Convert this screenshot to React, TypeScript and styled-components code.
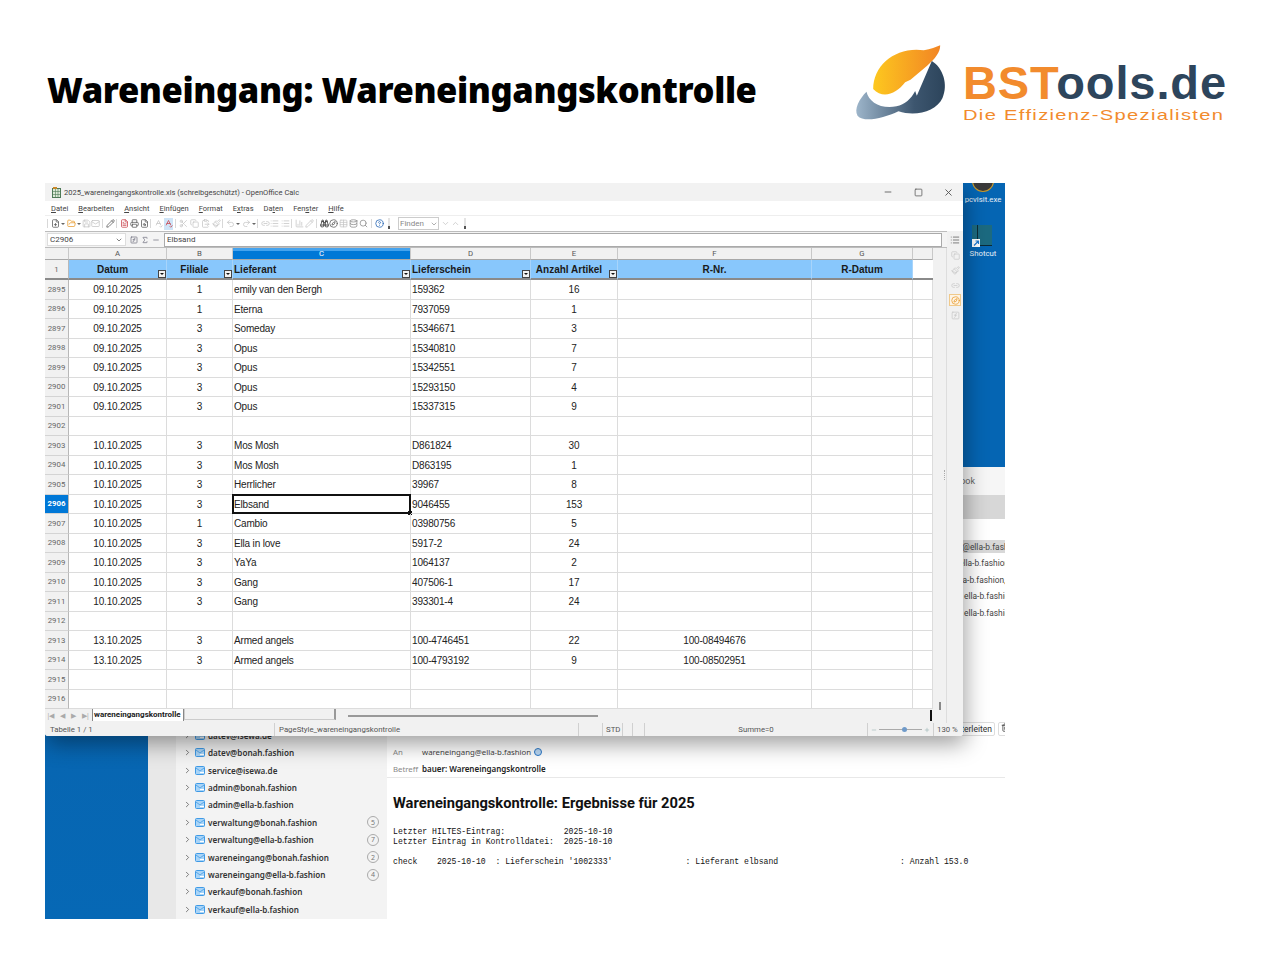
import React from 'react';
import styled, { createGlobalStyle } from 'styled-components';
import {
    BarChart3, Binoculars, ChevronDown, ChevronRight, ClipboardPaste, Compass, Copy, Database, FilePlus, FileSearch,
    FileText, FolderOpen, FunctionSquare, HelpCircle, Link2, List, Mail, Minus, Paintbrush, Pencil, Plus, Printer,
    Redo2, Save, Scissors, Search, Sigma, SpellCheck, Square, Table, Trash2, Undo2, X
} from 'lucide-react';

const GlobalStyle = createGlobalStyle`
    html, body { margin: 0; padding: 0; background: #fff; }
    body { font-family: "Liberation Sans", Arial, sans-serif; }
`;

const Slide = styled.div`
    width: 1280px;
    height: 962px;
    overflow: hidden;
    background: #fff;
`;

const Header = styled.header`
    height: 183px;
    box-sizing: border-box;
    padding: 43px 53px 0 47px;
    display: flex;
    justify-content: space-between;
    align-items: flex-start;
`;

const Title = styled.h1`
    margin: 24px 0 0;
    font-family: "Noto Sans", sans-serif;
    font-weight: 900;
    font-size: 34.5px;
    letter-spacing: -0.4px;
    line-height: 46px;
    color: #000;
    white-space: nowrap;
`;

const Logo = styled.div`
    display: flex;
    align-items: flex-start;
    gap: 13px;
`;

const LogoText = styled.div`
    display: flex;
    flex-direction: column;
    margin-top: 19px;
`;

const LogoName = styled.div`
    font-weight: 700;
    font-size: 47px;
    line-height: 42px;
    letter-spacing: 0.9px;
    color: #2d455c;
    white-space: nowrap;
    span { color: #f28b2d; }
`;

const LogoSub = styled.div`
    width: 194px;
    margin-top: 2px;
    font-size: 15px;
    line-height: 18px;
    letter-spacing: 1px;
    color: #f28b2d;
    white-space: nowrap;
    transform: scaleX(1.34);
    transform-origin: left center;
`;

const Shot = styled.div`
    position: relative;
    width: 960px;
    height: 736px;
    margin-left: 45px;
    overflow: hidden;
    display: flex;
`;

const DesktopStrip = styled.div`
    width: 103px;
    flex: none;
    background: linear-gradient(180deg, #0a5ea6, #0668b5);
`;

const MailApp = styled.div`
    flex: 1;
    min-width: 0;
    display: flex;
    flex-direction: column;
`;

const DesktopBand = styled.div`
    height: 284px;
    flex: none;
    overflow: hidden;
    background: #0565b3;
    display: flex;
    flex-direction: column;
    align-items: flex-end;
    padding-right: 3px;
`;

const DesktopIcon = styled.div`
    width: 38px;
    display: flex;
    flex-direction: column;
    align-items: center;
    margin-bottom: 20px;
    color: #e8f0f8;
    font: 7.8px/10px Roboto, sans-serif;
    white-space: nowrap;
    svg { margin-bottom: 2px; }
`;

const OutlookTabs = styled.div`
    height: 28px;
    flex: none;
    background: #f6f6f6;
    display: flex;
    justify-content: flex-end;
    align-items: center;
    padding-right: 30px;
    color: #666;
    font: 9px Roboto, sans-serif;
`;

const Ribbon = styled.div`
    height: 24px;
    flex: none;
    background: #d7d7d7;
`;

const MailBody = styled.div`
    flex: 1;
    min-height: 0;
    display: flex;
`;

const IconRail = styled.div`
    width: 28px;
    flex: none;
    background: #e8e8e8;
`;

const FolderPane = styled.div`
    width: 211px;
    flex: none;
    box-sizing: border-box;
    background: #f3f3f3;
    display: flex;
    flex-direction: column;
    justify-content: flex-end;
    padding-bottom: 1px;
`;

const FolderRow = styled.div`
    height: 17.4px;
    display: flex;
    align-items: center;
    padding-left: 7px;
    font: 600 8.1px "Noto Sans", sans-serif;
    color: #333;
    white-space: nowrap;
    svg { flex: none; }
`;

const FolderGap = styled.span`
    width: 3px;
    flex: none;
`;

const FolderName = styled.span`
    flex: 1;
    margin-left: 3px;
`;

const Count = styled.span`
    width: 10px;
    height: 10px;
    margin-right: 8px;
    border: 1px solid #aaa;
    border-radius: 50%;
    font: 7px "Noto Sans", sans-serif;
    color: #777;
    display: flex;
    align-items: center;
    justify-content: center;
`;

const MessagePane = styled.div`
    flex: 1;
    min-width: 0;
    overflow: hidden;
    background: #fff;
    display: flex;
    flex-direction: column;
`;

const Recipients = styled.div`
    height: 203px;
    flex: none;
    box-sizing: border-box;
    padding-top: 21px;
`;

const RecipientLine = styled.div<{ $indent: number; $active?: boolean }>`
    height: 16.4px;
    padding-left: ${p => p.$indent}px;
    font: 8.4px/14px Roboto, sans-serif;
    color: #444;
    white-space: nowrap;
    overflow: hidden;
    background: ${p => (p.$active ? 'linear-gradient(#d8d8d8 0 13px, transparent 13px)' : 'none')};
`;

const ActionRow = styled.div`
    height: 13px;
    flex: none;
    display: flex;
    justify-content: flex-end;
    margin-right: -8px;
    gap: 3px;
`;

const ActionButton = styled.span`
    box-sizing: border-box;
    height: 14px;
    border: 1px solid #ddd;
    border-radius: 2px;
    padding: 0 2px;
    font: 8.5px/12px Roboto, sans-serif;
    color: #333;
    white-space: nowrap;
    background: #fff;
`;

const MetaBlock = styled.div`
    flex: none;
    height: 43px;
    box-sizing: border-box;
    padding-top: 8px;
    border-bottom: 1px solid #e8e8e8;
`;

const MetaRow = styled.div`
    height: 17px;
    display: flex;
    align-items: center;
    padding-left: 6px;
    font: 7.8px "Noto Sans", sans-serif;
    color: #444;
    white-space: nowrap;
`;

const MetaLabel = styled.span`
    width: 29px;
    flex: none;
    color: #888;
`;

const MetaSubject = styled.span`
    font-size: 8px;
    font-weight: 600;
    color: #222;
`;

const Presence = styled.span`
    width: 6px;
    height: 6px;
    margin-left: 3px;
    border: 1px solid #2a78c8;
    border-radius: 50%;
    background: #bcd9f5;
`;

const Message = styled.div`
    padding: 15px 6px 0;
`;

const MessageTitle = styled.h2`
    margin: 0 0 14px;
    font: 700 14.7px/20px Roboto, sans-serif;
    color: #111;
    white-space: nowrap;
`;

const Mono = styled.pre`
    margin: 0;
    font: 8.13px/10px "Liberation Mono", monospace;
    color: #111;
`;

const CalcWindow = styled.div`
    position: absolute;
    left: 0;
    top: 0;
    width: 918px;
    height: 553px;
    display: flex;
    flex-direction: column;
    background: #f1f1f1;
    border-radius: 0 3px 3px 3px;
    box-shadow: 2px 8px 22px rgba(0, 0, 0, 0.38);
    color: #333;
`;

const TitleBar = styled.div`
    height: 18px;
    flex: none;
    display: flex;
    align-items: center;
    padding-left: 7px;
    background: #f2f2f2;
    font: 7.5px Roboto, sans-serif;
    color: #444;
`;

const TitleText = styled.span`
    flex: 1;
    margin-left: 3px;
    white-space: nowrap;
`;

const WindowButton = styled.span`
    width: 30px;
    height: 18px;
    display: flex;
    align-items: center;
    justify-content: center;
    color: #555;
`;

const MenuBar = styled.div`
    height: 14px;
    flex: none;
    display: flex;
    align-items: center;
    gap: 10px;
    padding-left: 6px;
    background: #fff;
    font: 7.5px Roboto, sans-serif;
    color: #444;
    u { text-decoration-thickness: 1px; }
`;

const ToolBar = styled.div`
    height: 16px;
    flex: none;
    display: flex;
    align-items: center;
    padding-left: 2px;
    background: #fff;
    border-top: 1px solid #eee;
    box-sizing: border-box;
`;

const Tool = styled.span<{ $gap?: number; $active?: boolean; $tint?: string }>`
    width: 9px;
    height: 12px;
    flex: none;
    margin-right: ${p => p.$gap ?? 0}px;
    display: flex;
    align-items: center;
    justify-content: center;
    color: ${p => p.$tint ?? '#c4c4c4'};
    background: ${p => (p.$active ? '#cfe4f7' : 'none')};
`;

const ToolSeparator = styled.span`
    width: 1px;
    height: 9px;
    flex: none;
    margin-right: 3px;
    background: #d8d8d8;
`;

const Caret = styled.span`
    width: 0;
    height: 0;
    flex: none;
    margin: 0 1.5px 0 1px;
    border-left: 2px solid transparent;
    border-right: 2px solid transparent;
    border-top: 2px solid #666;
`;

const Handle = styled.span<{ $after: number }>`
    width: 2px;
    height: 11px;
    flex: none;
    margin: 0 ${p => p.$after}px 0 4px;
    background: linear-gradient(#e4e4e4 0 8px, #555 8px);
`;

const FindBox = styled.span`
    box-sizing: border-box;
    width: 41px;
    height: 13px;
    flex: none;
    margin-right: 2px;
    border: 1px solid #ccc;
    display: flex;
    align-items: center;
    justify-content: space-between;
    padding-left: 1px;
    font: 8px Roboto, sans-serif;
    color: #888;
`;

const FormulaBar = styled.div`
    height: 17px;
    flex: none;
    box-sizing: border-box;
    display: flex;
    align-items: center;
    padding: 0 21px 0 2px;
    border-top: 1px solid #bcbcbc;
    border-bottom: 1px solid #bcbcbc;
    background: #f4f4f4;
    font: 8px Roboto, sans-serif;
    color: #444;
`;

const NameBox = styled.span`
    box-sizing: border-box;
    width: 79px;
    height: 13px;
    flex: none;
    display: flex;
    align-items: center;
    justify-content: space-between;
    padding: 0 2px;
    background: #fff;
    border: 1px solid #ddd;
`;

const FormulaTools = styled.span`
    width: 38px;
    flex: none;
    display: flex;
    align-items: center;
    justify-content: center;
    gap: 3px;
    color: #667;
`;

const FormulaInput = styled.span`
    box-sizing: border-box;
    flex: 1;
    height: 14px;
    padding-left: 2px;
    line-height: 12px;
    background: #fff;
    border: 1px solid #aaa;
`;

const Workspace = styled.div`
    flex: 1;
    min-height: 0;
    display: flex;
`;

const SheetColumn = styled.div`
    width: 888px;
    flex: none;
    display: flex;
    flex-direction: column;
`;

const COLUMNS = '24px 98px 66px 178px 120px 87px 194px 101px 20px';

const ColumnHeads = styled.div`
    display: grid;
    grid-template-columns: ${COLUMNS};
    height: 12px;
`;

const Sheet = styled.div`
    display: grid;
    grid-template-columns: ${COLUMNS};
    grid-template-rows: 20px;
    grid-auto-rows: 19.5px;
    background: #fff;
`;

const ColHead = styled.div<{ $selected?: boolean }>`
    height: 12px;
    box-sizing: border-box;
    text-align: center;
    font: 7.8px/11px Roboto, sans-serif;
    color: ${p => (p.$selected ? '#fff' : '#555')};
    background: ${p => (p.$selected ? 'linear-gradient(#45a3ee 0 3px, #0078d7 3px)' : '#f1f1f1')};
    border-right: 1px solid #c8c8c8;
    border-bottom: 1px solid #a8a8a8;
`;

const RowHead = styled.div<{ $selected?: boolean }>`
    box-sizing: border-box;
    display: flex;
    align-items: center;
    justify-content: center;
    font: ${p => (p.$selected ? 700 : 400)} 7.8px Roboto, sans-serif;
    color: ${p => (p.$selected ? '#fff' : '#666')};
    background: ${p => (p.$selected ? '#0078d7' : '#f1f1f1')};
    border-right: 1px solid #b8b8b8;
    border-bottom: 1px solid #d4d4d4;
`;

const Cell = styled.div<{ $align?: string }>`
    position: relative;
    box-sizing: border-box;
    padding: 0 1px;
    text-align: ${p => p.$align ?? 'left'};
    font-size: 10px;
    letter-spacing: -0.17px;
    line-height: 19px;
    color: #222;
    white-space: nowrap;
    border-right: 1px solid #dcdcdc;
    border-bottom: 1px solid #dcdcdc;
`;

const CursorFrame = styled.span`
    position: absolute;
    inset: -1px -1px -1px -1px;
    border: 2px solid #111;
    pointer-events: none;
    &::after {
        content: '';
        position: absolute;
        right: -3px;
        bottom: -3px;
        width: 4px;
        height: 4px;
        background: #111;
    }
`;

const HeadCell = styled.div<{ $align?: string; $filter?: boolean }>`
    position: relative;
    box-sizing: border-box;
    padding: ${p => (p.$align === 'left' ? '1px 1px 0' : p.$filter ? '1px 10px 0 0' : '1px 0 0')};
    text-align: ${p => p.$align ?? 'center'};
    font: 700 10px/18px "Liberation Sans", sans-serif;
    color: #1a1a1a;
    background: #88c7fc;
    white-space: nowrap;
    border-right: 1px solid #a7d4fb;
    border-bottom: 2px solid #8a8a8a;
`;

const HeadBlank = styled.div`
    background: #fff;
    border-bottom: 2px solid #8a8a8a;
`;

const HeadRowNumber = styled(RowHead)`
    border-bottom: 2px solid #8a8a8a;
`;

const FilterButton = styled.span`
    position: absolute;
    right: 0;
    bottom: 0;
    box-sizing: border-box;
    width: 8px;
    height: 8px;
    border: 1px solid #444;
    background: #f2f2f2;
    &::after {
        content: '';
        position: absolute;
        left: 1px;
        top: 2px;
        border-left: 2px solid transparent;
        border-right: 2px solid transparent;
        border-top: 2px solid #111;
    }
`;

const TabBar = styled.div`
    flex: 1;
    min-height: 0;
    display: flex;
    align-items: flex-start;
    background: #f1f1f1;
`;

const TabNav = styled.span`
    width: 11.5px;
    height: 13px;
    flex: none;
    display: flex;
    align-items: center;
    justify-content: center;
    color: #aaa;
    font-size: 6.5px;
`;

const ActiveTab = styled.span`
    box-sizing: border-box;
    height: 12px;
    margin-left: 1px;
    padding: 0 2px 0 1px;
    background: #fff;
    border-left: 1px solid #888;
    border-right: 1px solid #888;
    font: 700 8px/12px Roboto, sans-serif;
    color: #222;
    white-space: nowrap;
`;

const TabRest = styled.span`
    box-sizing: border-box;
    width: 152px;
    height: 11px;
    flex: none;
    border: 1px solid #ccc;
    border-top: none;
    border-right: 2px solid #999;
`;

const ScrollTrack = styled.span`
    flex: 1;
    height: 13px;
    margin-left: 12px;
    display: flex;
    align-items: center;
    justify-content: space-between;
    padding-right: 1px;
`;

const ScrollThumb = styled.span`
    width: 250px;
    height: 2px;
    background: #999;
`;

const ScrollEnd = styled.span`
    width: 2px;
    height: 11px;
    background: #111;
`;

const VScroll = styled.div`
    width: 14px;
    flex: none;
    display: flex;
    flex-direction: column;
    justify-content: flex-end;
    align-items: center;
    padding-bottom: 13px;
    box-sizing: border-box;
    background: #f1f1f1;
    border-right: 1px solid #ddd;
`;

const VThumb = styled.span`
    width: 2px;
    height: 8px;
    background: #888;
`;

const Deck = styled.div`
    position: relative;
    flex: 1;
    display: flex;
    flex-direction: column;
    align-items: center;
    padding-top: 3px;
    gap: 3px;
    margin-top: -17px;
    background: #f1f1f1;
    color: #ccc;
    z-index: 1;
`;

const DeckButton = styled.span<{ $active?: boolean; $tint?: string }>`
    box-sizing: border-box;
    width: 12px;
    height: 12px;
    display: flex;
    align-items: center;
    justify-content: center;
    color: ${p => p.$tint ?? '#c8c8c8'};
    border: ${p => (p.$active ? '1px solid #f0c98a' : 'none')};
    background: ${p => (p.$active ? '#fdf4e6' : 'none')};
`;

const DeckGrip = styled.span`
    position: absolute;
    left: -3px;
    top: 239px;
    width: 2px;
    height: 10px;
    border-left: 1px dotted #aaa;
`;

const StatusBar = styled.div`
    height: 13px;
    flex: none;
    display: flex;
    align-items: center;
    background: #f1f1f1;
    font: 7.8px/13px Roboto, sans-serif;
    color: #555;
    border-radius: 0 0 3px 3px;
`;

const StatusCell = styled.span<{ $width: number; $center?: boolean; $start?: number }>`
    box-sizing: border-box;
    width: ${p => p.$width}px;
    height: 13px;
    flex: none;
    padding-left: ${p => p.$start ?? 4}px;
    text-align: ${p => (p.$center ? 'center' : 'left')};
    border-right: 1px solid #d0d0d0;
    white-space: nowrap;
`;

const ZoomValue = styled.span`
    padding-left: 3px;
`;

const ZoomCell = styled.span`
    box-sizing: border-box;
    width: 66px;
    height: 13px;
    flex: none;
    padding: 0 3px;
    display: flex;
    align-items: center;
    gap: 2px;
    color: #8aa;
    border-right: 1px solid #d0d0d0;
`;

const ZoomTrack = styled.span`
    position: relative;
    flex: 1;
    height: 1px;
    background: #aaa;
`;

const ZoomKnob = styled.span`
    position: absolute;
    left: 23px;
    top: -2px;
    width: 5px;
    height: 5px;
    border-radius: 50%;
    background: #6f9ac9;
`;

const TINT = { blue: '#3d78b8', red: '#c8404a', orange: '#e89a2a', ink: '#555', green: '#4f9a5a' };

// row number, datum, filiale, lieferant, lieferschein, anzahl, r-nr
type RowData = [number, string, string, string, string, string, string];

const rows: RowData[] = [
    [2895, '09.10.2025', '1', 'emily van den Bergh', '159362', '16', ''],
    [2896, '09.10.2025', '1', 'Eterna', '7937059', '1', ''],
    [2897, '09.10.2025', '3', 'Someday', '15346671', '3', ''],
    [2898, '09.10.2025', '3', 'Opus', '15340810', '7', ''],
    [2899, '09.10.2025', '3', 'Opus', '15342551', '7', ''],
    [2900, '09.10.2025', '3', 'Opus', '15293150', '4', ''],
    [2901, '09.10.2025', '3', 'Opus', '15337315', '9', ''],
    [2902, '', '', '', '', '', ''],
    [2903, '10.10.2025', '3', 'Mos Mosh', 'D861824', '30', ''],
    [2904, '10.10.2025', '3', 'Mos Mosh', 'D863195', '1', ''],
    [2905, '10.10.2025', '3', 'Herrlicher', '39967', '8', ''],
    [2906, '10.10.2025', '3', 'Elbsand', '9046455', '153', ''],
    [2907, '10.10.2025', '1', 'Cambio', '03980756', '5', ''],
    [2908, '10.10.2025', '3', 'Ella in love', '5917-2', '24', ''],
    [2909, '10.10.2025', '3', 'YaYa', '1064137', '2', ''],
    [2910, '10.10.2025', '3', 'Gang', '407506-1', '17', ''],
    [2911, '10.10.2025', '3', 'Gang', '393301-4', '24', ''],
    [2912, '', '', '', '', '', ''],
    [2913, '13.10.2025', '3', 'Armed angels', '100-4746451', '22', '100-08494676'],
    [2914, '13.10.2025', '3', 'Armed angels', '100-4793192', '9', '100-08502951'],
    [2915, '', '', '', '', '', ''],
    [2916, '', '', '', '', '', '']
];

const folders: [string, number?][] = [
    ['datev@isewa.de'],
    ['datev@bonah.fashion'],
    ['service@isewa.de'],
    ['admin@bonah.fashion'],
    ['admin@ella-b.fashion'],
    ['verwaltung@bonah.fashion', 5],
    ['verwaltung@ella-b.fashion', 7],
    ['wareneingang@bonah.fashion', 2],
    ['wareneingang@ella-b.fashion', 4],
    ['verkauf@bonah.fashion'],
    ['verkauf@ella-b.fashion']
];

const LogoMark = () => (
    <svg width="97" height="80" viewBox="40 40 290 240">
        <defs>
            <linearGradient id="sun" x1="0" x2="1" y1="0" y2="0">
                <stop offset="0" stopColor="#fdc81f" />
                <stop offset="1" stopColor="#f28524" />
            </linearGradient>
            <linearGradient id="night" x1="0" x2="1" y1="0" y2="0">
                <stop offset="0" stopColor="#9db5ca" />
                <stop offset="0.65" stopColor="#3d566f" />
                <stop offset="1" stopColor="#2c445b" />
            </linearGradient>
        </defs>
        <path d="M100 178 C100 105 170 50 252 62 C272 58 290 52 301 47 C302 66 286 88 262 108 L212 150 L196 158 C170 192 130 210 100 178 Z" fill="url(#sun)" />
        <path d="M276 94 C310 115 326 165 308 205 C290 245 228 262 176 245 C130 266 72 280 53 258 C42 238 58 208 80 186 C86 216 124 240 170 230 C195 224 214 208 226 184 L231 198 L262 126 Z" fill="url(#night)" />
    </svg>
);

const MailFolderIcon = () => (
    <svg width="10" height="9" viewBox="0 0 10 9">
        <rect x="0.5" y="0.5" width="9" height="8" rx="1" fill="#a9d4f7" stroke="#3f9ae6" />
        <path d="M1 2 L5 5 L9 2" fill="none" stroke="#3f9ae6" strokeWidth="0.8" />
        <path d="M5 6.5 H9" stroke="#fff" strokeWidth="1" />
    </svg>
);

const ShotcutIcon = () => (
    <svg width="22" height="22" viewBox="0 0 22 22">
        <rect x="0" y="0" width="20" height="21" fill="#1c6a80" />
        <rect x="5" y="0" width="1" height="21" fill="#0b2a36" />
        <rect x="0" y="20" width="20" height="1" fill="#0b2a36" />
        <rect x="0" y="14" width="8" height="8" fill="#fff" />
        <path d="M2 20.5 L6 16.5 M3.5 16 H6.5 V19" stroke="#1f7ad0" strokeWidth="1.2" fill="none" />
    </svg>
);

const CalcIcon = () => (
    <svg width="9" height="11" viewBox="0 0 9 11">
        <rect x="0.5" y="1.5" width="8" height="9" fill="#dcead8" stroke="#4f7a58" />
        <path d="M0.5 4.5H8.5M0.5 7.5H8.5M3.5 1.5V10.5M6 1.5V10.5" stroke="#4f7a58" strokeWidth="0.6" />
        <rect x="1" y="0" width="4" height="2" fill="#c9882a" />
    </svg>
);

const SheetGrid = () => (
    <Sheet>
        <HeadRowNumber>1</HeadRowNumber>
        <HeadCell $filter>Datum<FilterButton /></HeadCell>
        <HeadCell $filter>Filiale<FilterButton /></HeadCell>
        <HeadCell $align="left">Lieferant<FilterButton /></HeadCell>
        <HeadCell $align="left">Lieferschein<FilterButton /></HeadCell>
        <HeadCell $filter>Anzahl Artikel<FilterButton /></HeadCell>
        <HeadCell>R-Nr.</HeadCell>
        <HeadCell>R-Datum</HeadCell>
        <HeadBlank />
        {rows.map(r => {
            const selected = r[0] === 2906;
            return (
                <React.Fragment key={r[0]}>
                    <RowHead $selected={selected}>{r[0]}</RowHead>
                    <Cell $align="center">{r[1]}</Cell>
                    <Cell $align="center">{r[2]}</Cell>
                    <Cell>{r[3]}{selected && <CursorFrame />}</Cell>
                    <Cell>{r[4]}</Cell>
                    <Cell $align="center">{r[5]}</Cell>
                    <Cell $align="center">{r[6]}</Cell>
                    <Cell />
                    <Cell />
                </React.Fragment>
            );
        })}
    </Sheet>
);

const Toolbar = () => (
    <ToolBar>
        <ToolSeparator />
        <Tool $tint={TINT.ink}><FilePlus size={9} /></Tool><Caret />
        <Tool $tint={TINT.orange}><FolderOpen size={9} /></Tool><Caret />
        <Tool><Save size={9} /></Tool>
        <Tool $gap={2}><Mail size={9} /></Tool>
        <ToolSeparator />
        <Tool $gap={1} $tint={TINT.ink}><Pencil size={9} /></Tool>
        <ToolSeparator />
        <Tool $gap={1} $tint={TINT.red}><FileText size={9} /></Tool>
        <Tool $gap={1} $tint={TINT.ink}><Printer size={9} /></Tool>
        <Tool $gap={1} $tint={TINT.ink}><FileSearch size={9} /></Tool>
        <ToolSeparator />
        <Tool $gap={1}><SpellCheck size={9} /></Tool>
        <Tool $active $gap={2} $tint={TINT.red}><SpellCheck size={9} /></Tool>
        <ToolSeparator />
        <Tool $gap={2}><Scissors size={9} /></Tool>
        <Tool $gap={2}><Copy size={9} /></Tool>
        <Tool $gap={2}><ClipboardPaste size={9} /></Tool>
        <Tool $gap={1}><Paintbrush size={9} /></Tool>
        <ToolSeparator />
        <Tool><Undo2 size={9} /></Tool><Caret />
        <Tool><Redo2 size={9} /></Tool><Caret />
        <ToolSeparator />
        <Tool><Link2 size={9} /></Tool>
        <Tool $gap={2}><List size={9} /></Tool>
        <Tool $gap={1}><List size={9} /></Tool>
        <ToolSeparator />
        <Tool $gap={1}><BarChart3 size={9} /></Tool>
        <Tool $gap={2}><Pencil size={9} /></Tool>
        <ToolSeparator />
        <Tool $tint="#222"><Binoculars size={9} /></Tool>
        <Tool $gap={1} $tint={TINT.ink}><Compass size={9} /></Tool>
        <Tool $gap={1}><Table size={9} /></Tool>
        <Tool $gap={1} $tint="#888"><Database size={9} /></Tool>
        <Tool $gap={3} $tint="#888"><Search size={9} /></Tool>
        <ToolSeparator />
        <Tool $tint="#1d5fb0"><HelpCircle size={9} /></Tool>
        <Handle $after={8} />
        <FindBox>Finden<ChevronDown size={8} /></FindBox>
        <Tool $gap={1}><ChevronDown size={9} /></Tool>
        <Tool><ChevronDown size={9} style={{ transform: 'rotate(180deg)' }} /></Tool>
        <Handle $after={0} />
    </ToolBar>
);

const StatusRow = () => (
    <StatusBar>
        <StatusCell $width={230} $start={5}>Tabelle 1 / 1</StatusCell>
        <StatusCell $width={304}>PageStyle_wareneingangskontrolle</StatusCell>
        <StatusCell $width={24} />
        <StatusCell $width={20} $start={3}>STD</StatusCell>
        <StatusCell $width={10} />
        <StatusCell $width={12} />
        <StatusCell $width={223} $center $start={0}>Summe=0</StatusCell>
        <ZoomCell>
            <Minus size={6} />
            <ZoomTrack><ZoomKnob /></ZoomTrack>
            <Plus size={6} />
        </ZoomCell>
        <ZoomValue>130 %</ZoomValue>
    </StatusBar>
);

const Calc = () => (
    <CalcWindow>
        <TitleBar>
            <CalcIcon />
            <TitleText>2025_wareneingangskontrolle.xls (schreibgeschützt) - OpenOffice Calc</TitleText>
            <WindowButton><Minus size={10} /></WindowButton>
            <WindowButton><Square size={9} /></WindowButton>
            <WindowButton><X size={11} /></WindowButton>
        </TitleBar>
        <MenuBar>
            <span><u>D</u>atei</span>
            <span><u>B</u>earbeiten</span>
            <span><u>A</u>nsicht</span>
            <span><u>E</u>infügen</span>
            <span><u>F</u>ormat</span>
            <span>E<u>x</u>tras</span>
            <span>Da<u>t</u>en</span>
            <span>Fen<u>s</u>ter</span>
            <span><u>H</u>ilfe</span>
        </MenuBar>
        <Toolbar />
        <FormulaBar>
            <NameBox>C2906<ChevronDown size={8} /></NameBox>
            <FormulaTools>
                <FunctionSquare size={8} />
                <Sigma size={8} />
                <Minus size={8} />
            </FormulaTools>
            <FormulaInput>Elbsand</FormulaInput>
        </FormulaBar>
        <Workspace>
            <SheetColumn>
                <ColumnHeads>
                    <ColHead />
                    <ColHead>A</ColHead>
                    <ColHead>B</ColHead>
                    <ColHead $selected>C</ColHead>
                    <ColHead>D</ColHead>
                    <ColHead>E</ColHead>
                    <ColHead>F</ColHead>
                    <ColHead>G</ColHead>
                    <ColHead />
                </ColumnHeads>
                <SheetGrid />
                <TabBar>
                    <TabNav>|◀</TabNav>
                    <TabNav>◀</TabNav>
                    <TabNav>▶</TabNav>
                    <TabNav>▶|</TabNav>
                    <ActiveTab>wareneingangskontrolle</ActiveTab>
                    <TabRest />
                    <ScrollTrack>
                        <ScrollThumb />
                        <ScrollEnd />
                    </ScrollTrack>
                </TabBar>
            </SheetColumn>
            <VScroll><VThumb /></VScroll>
            <Deck>
                <DeckGrip />
                <DeckButton $tint="#666"><List size={10} /></DeckButton>
                <DeckButton><Copy size={9} /></DeckButton>
                <DeckButton><Paintbrush size={9} /></DeckButton>
                <DeckButton><Link2 size={9} /></DeckButton>
                <DeckButton $active $tint={TINT.orange}><Compass size={9} /></DeckButton>
                <DeckButton><FunctionSquare size={9} /></DeckButton>
            </Deck>
        </Workspace>
        <StatusRow />
    </CalcWindow>
);

const MailBackdrop = () => (
    <MailApp>
        <DesktopBand>
            <DesktopIcon>
                <svg width="24" height="10" viewBox="0 14 24 10">
                    <circle cx="12" cy="12" r="10.5" fill="#3a3a3a" stroke="#c99a2e" strokeWidth="1.2" />
                </svg>
                pcvisit.exe
            </DesktopIcon>
            <DesktopIcon>
                <ShotcutIcon />
                Shotcut
            </DesktopIcon>
        </DesktopBand>
        <OutlookTabs>Outlook</OutlookTabs>
        <Ribbon />
        <MailBody>
            <IconRail />
            <FolderPane>
                {folders.map(([name, count]) => (
                    <FolderRow key={name}>
                        <ChevronRight size={9} color="#555" />
                        <FolderGap />
                        <MailFolderIcon />
                        <FolderName>{name}</FolderName>
                        {count !== undefined && <Count>{count}</Count>}
                    </FolderRow>
                ))}
            </FolderPane>
            <MessagePane>
                <Recipients>
                    <RecipientLine $active $indent={523}>wareneingang@ella-b.fashion</RecipientLine>
                    <RecipientLine $indent={572}>ella-b.fashion</RecipientLine>
                    <RecipientLine $indent={567}>ella-b.fashion,</RecipientLine>
                    <RecipientLine $indent={577}>ella-b.fashion</RecipientLine>
                    <RecipientLine $indent={577}>ella-b.fashion</RecipientLine>
                </Recipients>
                <ActionRow>
                    <ActionButton>Weiterleiten</ActionButton>
                    <ActionButton><Trash2 size={9} /></ActionButton>
                </ActionRow>
                <MetaBlock>
                    <MetaRow>
                        <MetaLabel>An</MetaLabel>
                        wareneingang@ella-b.fashion
                        <Presence />
                    </MetaRow>
                    <MetaRow>
                        <MetaLabel>Betreff</MetaLabel>
                        <MetaSubject>bauer: Wareneingangskontrolle</MetaSubject>
                    </MetaRow>
                </MetaBlock>
                <Message>
                    <MessageTitle>Wareneingangskontrolle: Ergebnisse für 2025</MessageTitle>
                    <Mono>{`Letzter HILTES-Eintrag:            2025-10-10
Letzter Eintrag in Kontrolldatei:  2025-10-10

check    2025-10-10  : Lieferschein '1002333'               : Lieferant elbsand                         : Anzahl 153.0`}</Mono>
                </Message>
            </MessagePane>
        </MailBody>
    </MailApp>
);

export default function App() {
    return (
        <Slide>
            <GlobalStyle />
            <Header>
                <Title>Wareneingang: Wareneingangskontrolle</Title>
                <Logo>
                    <LogoMark />
                    <LogoText>
                        <LogoName><span>BST</span>ools.de</LogoName>
                        <LogoSub>Die Effizienz-Spezialisten</LogoSub>
                    </LogoText>
                </Logo>
            </Header>
            <Shot>
                <DesktopStrip />
                <MailBackdrop />
                <Calc />
            </Shot>
        </Slide>
    );
}
